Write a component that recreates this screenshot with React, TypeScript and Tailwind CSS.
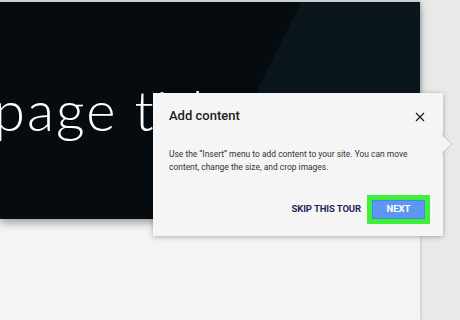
import React from "react";

export default function App() {
  return (
    <div className="relative w-[460px] h-[320px] overflow-hidden bg-[#e9e9e9] flex">
      {/* page column */}
      <div className="w-[420px] h-full bg-[#f4f4f4] flex flex-col shadow-[1px_0_3px_rgba(0,0,0,0.15)]">
        <div className="h-[2px] bg-[#d6d6d6]" />
        <div className="relative h-[217px] bg-[#060b0f] overflow-hidden shadow-[0_4px_8px_rgba(0,0,0,0.35)]">
          <svg className="absolute inset-0" width="420" height="217" viewBox="0 0 420 217">
            <polygon points="301,0 420,0 420,217 193,217" fill="#0a151c" />
          </svg>
          <div className="relative mt-[76px] ml-[-6px] whitespace-nowrap text-white font-light text-[56px] leading-[64px] tracking-[2px] font-['Lato','Open_Sans',sans-serif]">
            page title
          </div>
        </div>
      </div>

      {/* tour popup */}
      <div className="absolute left-[153px] top-[93px] w-[290px] h-[143px] bg-[#f5f5f5] shadow-[0_1px_5px_rgba(0,0,0,0.3)] flex flex-col pl-[16px] pr-[13px] pt-[15px] font-['Roboto','Liberation_Sans',sans-serif]">
        <div className="flex items-center justify-between h-[16px]">
          <div className="text-[13px] font-medium text-[#202020] leading-[16px]">Add content</div>
          <svg width="10" height="10" viewBox="0 0 10 10" className="mr-[5px] mt-[1px]">
            <path d="M1 1 L9 9 M9 1 L1 9" stroke="#222" strokeWidth="1.3" />
          </svg>
        </div>
        <div className="mt-[24px] text-[8.45px] leading-[13px] text-[#333] pr-[18px]">
          Use the “Insert” menu to add content to your site. You can move content, change the size, and crop images.
        </div>
        <div className="mt-[21px] flex items-center justify-end gap-[6px]">
          <div className="text-[9.5px] font-bold text-[#1d2b5c] tracking-[-0.1px]">SKIP THIS TOUR</div>
          <div className="border-[5px] border-[#3cf03c]">
            <div className="w-[53px] h-[19px] bg-[#5d97f2] border border-[#4d86e0] flex items-center justify-center text-white text-[9.5px] font-bold">
              NEXT
            </div>
          </div>
        </div>
        <svg className="absolute left-[289px] top-[41px]" width="12" height="20" viewBox="0 0 12 20">
          <polygon points="0,1 10,10 0,19" fill="#f5f5f5" />
          <polyline points="0,1 10,10 0,19" fill="none" stroke="#c6c6c6" strokeWidth="1" />
        </svg>
      </div>
    </div>
  );
}
